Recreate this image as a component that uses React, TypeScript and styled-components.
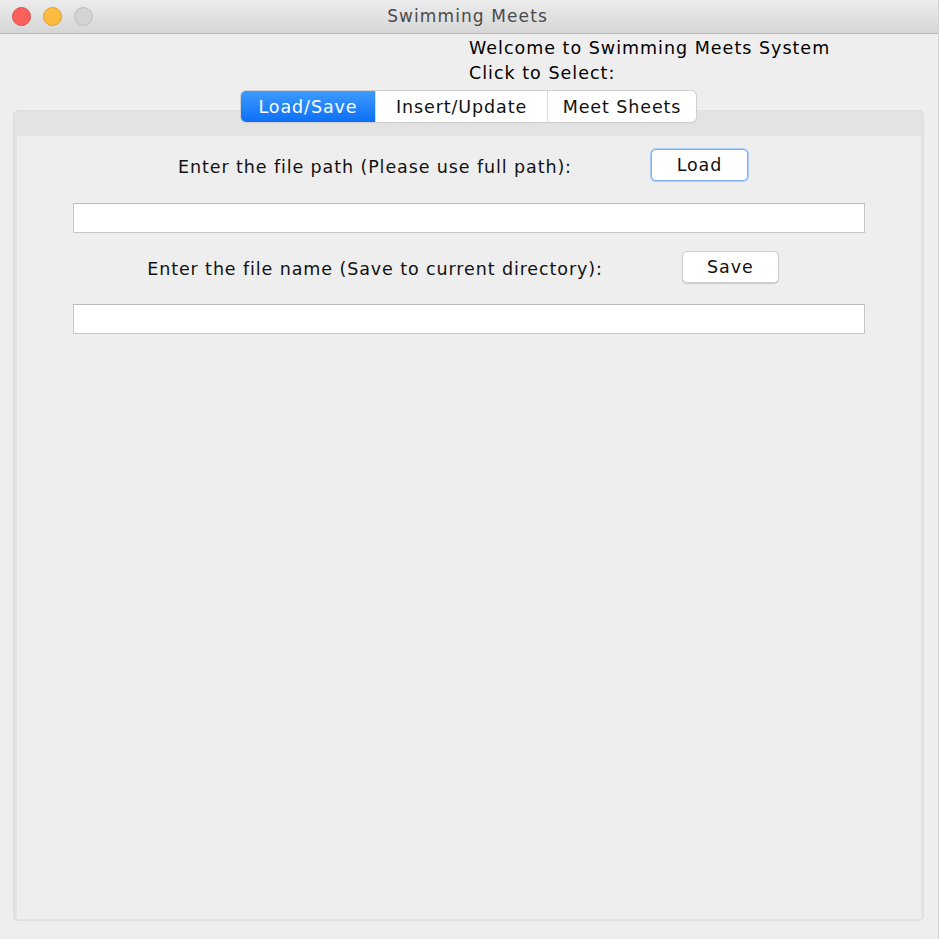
import React from "react";
import styled, { createGlobalStyle } from "styled-components";

const Global = createGlobalStyle`
  html, body {
    margin: 0;
    padding: 0;
    background: #eeeeee;
  }
  * { box-sizing: border-box; }
`;

const Window = styled.div`
  width: 939px;
  height: 939px;
  background: #eeeeee;
  border-right: 1px solid #d4d4d4;
  font-family: "DejaVu Sans", "Liberation Sans", sans-serif;
  color: #111;
  display: flex;
  flex-direction: column;
  overflow: hidden;
`;

const TitleBar = styled.div`
  height: 34px;
  flex: none;
  display: flex;
  align-items: center;
  background: linear-gradient(#ececec, #d6d6d6);
  border-bottom: 1px solid #b8b8b8;
  border-radius: 5px 5px 0 0;
`;

const Lights = styled.div`
  display: flex;
  gap: 12px;
  padding-left: 12px;
`;

const Light = styled.span<{ $fill: string; $edge: string }>`
  width: 19px;
  height: 19px;
  border-radius: 50%;
  background: ${(p) => p.$fill};
  border: 1px solid ${(p) => p.$edge};
`;

const Title = styled.div`
  flex: 1;
  text-align: center;
  margin-left: -96px;
  font-size: 17px;
  letter-spacing: 1.1px;
  color: #4a4a4a;
  padding-bottom: 1px;
`;

const Header = styled.div`
  padding: 2px 0 0 469px;
  font-size: 17.5px;
  letter-spacing: 1px;
  line-height: 25px;
  color: #000;
`;

const TabPane = styled.div`
  margin: 5px 14px 0 13px;
  display: flex;
  flex-direction: column;
  flex: none;
`;

const TabBar = styled.div`
  align-self: center;
  display: flex;
  height: 31px;
  margin-bottom: -12px;
  position: relative;
  z-index: 1;
  border-radius: 5px;
  background: #fff;
  box-shadow: 0 0 0 1px #cfcfcf, 0 1px 1px rgba(0, 0, 0, 0.12);
`;

const Tab = styled.div<{ $active?: boolean; $w: number }>`
  width: ${(p) => p.$w}px;
  display: flex;
  align-items: center;
  justify-content: center;
  font-size: 17.5px;
  letter-spacing: 0.9px;
  color: ${(p) => (p.$active ? "#fff" : "#111")};
  background: ${(p) => (p.$active ? "linear-gradient(#3d9bfd, #0d6ff6)" : "transparent")};
  border-left: ${(p) => (p.$active ? "none" : "1px solid #dcdcdc")};
  &:first-child {
    border-radius: 5px 0 0 5px;
  }
  &:last-child {
    border-radius: 0 5px 5px 0;
  }
`;

const Panel = styled.div`
  height: 811px;
  border: 1px solid #dedede;
  border-radius: 5px;
  background: #e3e3e3;
  padding: 25px 2px 1px 3px;
  display: flex;
`;

const Content = styled.div`
  flex: 1;
  background: #eeeeee;
  padding: 13px 56px 0 56px;
  display: flex;
  flex-direction: column;
`;

const Row = styled.div<{ $top: number }>`
  margin-top: ${(p) => p.$top}px;
  display: flex;
  align-items: center;
  justify-content: center;
  gap: 79px;
  padding-right: 12px;
  height: 32px;
`;

const Label = styled.span`
  font-size: 17.5px;
  letter-spacing: 0.9px;
  color: #111;
  padding-top: 4px;
`;

const Button = styled.button<{ $focus?: boolean }>`
  width: 97px;
  height: 32px;
  background: #fff;
  border-radius: 5px;
  font-family: inherit;
  font-size: 17.5px;
  letter-spacing: 0.9px;
  color: #111;
  padding: 0;
  border: 1px solid ${(p) => (p.$focus ? "#7cb2f3" : "#cdcdcd")};
  box-shadow: ${(p) =>
    p.$focus ? "0 0 0 1px #a9cdf7" : "0 1px 1px rgba(0, 0, 0, 0.15)"};
`;

const Field = styled.input<{ $top: number }>`
  margin-top: ${(p) => p.$top}px;
  height: 30px;
  width: 792px;
  background: #fff;
  border: 1px solid #c4c4c4;
  border-top-color: #bcbcbc;
  outline: none;
  padding: 0 4px;
  font-family: inherit;
  font-size: 15px;
`;

export default function App() {
  return (
    <>
      <Global />
      <Window>
        <TitleBar>
          <Lights>
            <Light $fill="#fc605b" $edge="#de4b47" />
            <Light $fill="#fdbb40" $edge="#dea035" />
            <Light $fill="#d3d3d3" $edge="#bfbfbf" />
          </Lights>
          <Title>Swimming Meets</Title>
        </TitleBar>
        <Header>
          <div>Welcome to Swimming Meets System</div>
          <div>Click to Select:</div>
        </Header>
        <TabPane>
          <TabBar>
            <Tab $active $w={134}>Load/Save</Tab>
            <Tab $w={172}>Insert/Update</Tab>
            <Tab $w={149}>Meet Sheets</Tab>
          </TabBar>
          <Panel>
            <Content>
              <Row $top={0}>
                <Label>Enter the file path (Please use full path):</Label>
                <Button $focus>Load</Button>
              </Row>
              <Field $top={22} />
              <Row $top={18}>
                <Label>Enter the file name (Save to current directory):</Label>
                <Button>Save</Button>
              </Row>
              <Field $top={21} />
            </Content>
          </Panel>
        </TabPane>
      </Window>
    </>
  );
}
